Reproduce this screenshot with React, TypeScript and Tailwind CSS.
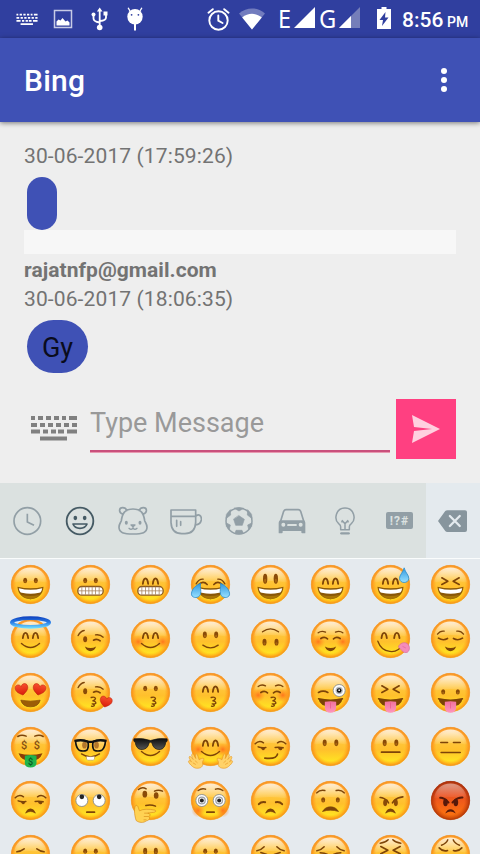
import type { ReactNode } from "react";

const INK = "#7d4408";

/* ---------- emoji parts, drawn around the centre of a face of radius 58 ---------- */

type DotsProps = { x?: number; y?: number; rx?: number; ry?: number };
const Dots = ({ x = 16, y = -12, rx = 6, ry = 8 }: DotsProps) => (
  <g fill="#8a4b08">
    <ellipse cx={-x} cy={y} rx={rx} ry={ry} />
    <ellipse cx={x} cy={y} rx={rx} ry={ry} />
    <ellipse cx={-x} cy={y + ry * 0.4} rx={rx * 0.5} ry={ry * 0.4} fill="#a9660f" />
    <ellipse cx={x} cy={y + ry * 0.4} rx={rx * 0.5} ry={ry * 0.4} fill="#a9660f" />
  </g>
);

const Line = ({ d, w = 4.5, c = INK }: { d: string; w?: number; c?: string }) => (
  <path d={d} fill="none" stroke={c} strokeWidth={w} strokeLinecap="round" strokeLinejoin="round" />
);

const Arches = ({ x = 15, y = -10 }: { x?: number; y?: number }) => (
  <g transform={`translate(0 ${y})`}>
    <g transform={`translate(${-x} 0)`}><Line d="M-8 8Q-6 -8 0 -8Q6 -8 8 8" w={5.5} /></g>
    <g transform={`translate(${x} 0)`}><Line d="M-8 8Q-6 -8 0 -8Q6 -8 8 8" w={5.5} /></g>
  </g>
);

const Grin = () => (
  <g>
    <path d="M-39 7Q0 16 39 7C38 30 21 44 0 44C-21 44 -38 30 -39 7Z" fill="#8a5808" />
    <path d="M-27 31Q0 38 27 31Q15 44 0 44Q-15 44 -27 31Z" fill="#a87406" />
    <path d="M-35 11Q0 20 35 11Q33 24 26 25Q0 31 -26 25Q-33 24 -35 11Z" fill="#fff" />
  </g>
);

const Grimace = () => (
  <g>
    <rect x="-38" y="6" width="76" height="26" rx="12" fill="#fff" stroke="#8a5a20" strokeWidth="4" />
    <path d="M-37 19H37M-26 7V31M-15 7V31M-5 7V31M5 7V31M15 7V31M26 7V31" stroke="#a88662" strokeWidth="2.4" />
  </g>
);

const Smile = () => <Line d="M-27 15Q0 39 27 15" />;
const SmallSmile = () => <path d="M-17 24Q0 33 17 24Q11 38 0 38Q-11 38 -17 24Z" fill={INK} />;
const Frown = () => <path d="M-15 38Q-10 25 0 25Q10 25 15 38Q7 33 0 33Q-7 33 -15 38Z" fill={INK} stroke={INK} strokeWidth="1.5" />;

const Blush = ({ y = 10 }: { y?: number }) => (
  <g>
    <circle cx="-37" cy={y} r="21" fill="url(#blush)" />
    <circle cx="37" cy={y} r="21" fill="url(#blush)" />
  </g>
);

const Heart = ({ x, y, s = 1, r = 0 }: { x: number; y: number; s?: number; r?: number }) => (
  <path
    transform={`translate(${x} ${y}) rotate(${r}) scale(${s})`}
    d="M0 17C-9 11 -20 4 -19 -7C-18 -18 -4 -19 0 -9C4 -19 18 -18 19 -7C20 4 9 11 0 17Z"
    fill="url(#heart)"
    stroke="#b9200c"
    strokeWidth="1.5"
  />
);

const Kiss = () => <Line d="M2 15Q13 12 15 18Q15 22 7 25Q17 27 16 32Q13 35 5 34Q13 36 11 40Q7 43 3 41" w={4} />;

const Squeeze = () => (
  <g>
    <Line d="M-26 -20L-8 -10L-26 0" w={5} />
    <Line d="M26 -20L8 -10L26 0" w={5} />
  </g>
);

const Tongue = () => (
  <g>
    <path d="M-36 19Q0 27 36 19Q33 42 0 42Q-33 42 -36 19Z" fill="#7b4306" />
    <path d="M-17 28Q0 24 17 28V45Q16 61 0 61Q-16 61 -17 45Z" fill="url(#tongue)" />
    <path d="M0 30V48" stroke="#e85586" strokeWidth="2" />
    <Line d="M-36 19Q0 27 36 19" />
  </g>
);

const Wink = () => (
  <g>
    <Line d="M-37 -9Q-30 -22 -19 -24" />
    <ellipse cx="-16" cy="2" rx="6" ry="9" fill="#8a4b08" />
    <Line d="M15 -11Q29 -13 38 -4" w={4} />
    <Line d="M9 5Q19 -1 29 7" w={5} />
  </g>
);

const SoftBrows = ({ y = -19 }: { y?: number }) => (
  <g transform={`translate(0 ${y})`}>
    <Line d="M-37 3Q-27 -5 -15 1" w={4} />
    <Line d="M37 3Q27 -5 15 1" w={4} />
  </g>
);

const ClosedUp = () => (
  <g>
    <Line d="M-29 0Q-18 -7 -9 1" w={5} />
    <Line d="M29 0Q18 -7 9 1" w={5} />
  </g>
);

const SideEyes = () => (
  <g>
    <Line d="M-46 -8Q-34 -20 -21 -11" />
    <Line d="M21 -11Q34 -20 46 -8" />
    <Line d="M-37 1Q-27 5 -14 3" />
    <Line d="M14 3Q27 1 38 4" />
    <path d="M-29 2H-15Q-17 11 -23 11Q-28 10 -29 2ZM22 3H37Q35 12 29 11Q23 10 22 3Z" fill={INK} />
  </g>
);

const RoundEye = ({ x, y, r = 18, px = 0, py = 0, p = 7 }: { x: number; y: number; r?: number; px?: number; py?: number; p?: number }) => (
  <g>
    <circle cx={x} cy={y} r={r} fill="#fff" stroke="#80858a" strokeWidth="2.5" />
    <circle cx={x + px} cy={y + py} r={p} fill="#252525" />
  </g>
);

const Dollar = ({ x, y, s = 28, c = "#855011" }: { x: number; y: number; s?: number; c?: string }) => (
  <text x={x} y={y} textAnchor="middle" fontFamily="Roboto, sans-serif" fontWeight="500" fontSize={s} fill={c}>$</text>
);

const Drop = ({ d }: { d: string }) => <path d={d} fill="url(#water)" stroke="#2f8fcc" strokeWidth="2.5" />;

const Hand = ({ flip = false }: { flip?: boolean }) => (
  <g transform={flip ? "scale(-1 1)" : undefined} stroke="#e89a24" strokeWidth="2">
    <path
      d="M-54 60C-61 54 -66 49 -66 44C-65 41 -61 42 -57 46C-62 39 -66 33 -63 30C-60 28 -56 35 -52 39C-57 30 -58 23 -54 22C-50 22 -49 30 -44 36C-46 28 -46 22 -42 22C-38 24 -37 34 -34 40C-31 37 -23 33 -20 36C-18 39 -24 42 -24 48C-22 58 -26 64 -36 65C-44 66 -49 64 -54 60Z"
      fill="#ffd268"
    />
    <path d="M-53 49L-44 54M-47 42L-39 49" fill="none" />
  </g>
);

const Face = ({ children, angry = false }: { children: ReactNode; angry?: boolean }) => (
  <svg viewBox="-91.5 -79.5 180 162" className="block h-[54px] w-[60px] overflow-visible">
    <circle r="58.5" fill={angry ? "url(#rage)" : "url(#skin)"} />
    <circle r="57.5" fill={angry ? "url(#rageRim)" : "url(#rim)"} stroke={angry ? "#a03c1c" : "#e8983c"} strokeOpacity="0.65" strokeWidth="2.5" />
    <path d="M-49 -6C-46 -34 -26 -51 0 -51C26 -51 46 -34 49 -6Q0 -15 -49 -6Z" fill="url(#gloss)" opacity={angry ? 0.6 : 1} />
    {children}
  </svg>
);

const Defs = () => (
  <svg width="0" height="0" className="absolute">
    <defs>
      <linearGradient id="skin" x1="0" y1="0" x2="0" y2="1">
        <stop offset="0" stopColor="#ffc05a" />
        <stop offset=".35" stopColor="#ffc63e" />
        <stop offset=".58" stopColor="#ffc02c" />
        <stop offset=".88" stopColor="#ffe322" />
        <stop offset="1" stopColor="#ffdc1c" />
      </linearGradient>
      <linearGradient id="rage" x1="0" y1="0" x2="0" y2="1">
        <stop offset="0" stopColor="#bd4320" />
        <stop offset=".35" stopColor="#ea5020" />
        <stop offset="1" stopColor="#ff7a0c" />
      </linearGradient>
      <radialGradient id="rim">
        <stop offset=".74" stopColor="#ff9b18" stopOpacity="0" />
        <stop offset="1" stopColor="#fa8614" stopOpacity=".9" />
      </radialGradient>
      <radialGradient id="rageRim">
        <stop offset=".72" stopColor="#c03a08" stopOpacity="0" />
        <stop offset="1" stopColor="#a82c04" stopOpacity=".85" />
      </radialGradient>
      <linearGradient id="gloss" x1="0" y1="0" x2="0" y2="1">
        <stop offset="0" stopColor="#fff" stopOpacity=".78" />
        <stop offset="1" stopColor="#fff" stopOpacity=".05" />
      </linearGradient>
      <radialGradient id="blush">
        <stop offset="0" stopColor="#ff6418" stopOpacity=".8" />
        <stop offset="1" stopColor="#ff8c1c" stopOpacity="0" />
      </radialGradient>
      <linearGradient id="heart" x1="0" y1="0" x2="0" y2="1">
        <stop offset="0" stopColor="#f8502c" />
        <stop offset="1" stopColor="#d81c0c" />
      </linearGradient>
      <linearGradient id="tongue" x1="0" y1="0" x2="0" y2="1">
        <stop offset="0" stopColor="#f0709c" />
        <stop offset="1" stopColor="#ff98bc" />
      </linearGradient>
      <linearGradient id="water" x1="0" y1="0" x2="0" y2="1">
        <stop offset="0" stopColor="#3098e0" />
        <stop offset="1" stopColor="#98e0ff" />
      </linearGradient>
      <linearGradient id="halo" gradientUnits="userSpaceOnUse" x1="0" y1="-67" x2="0" y2="-30">
        <stop offset="0" stopColor="#0c3cba" />
        <stop offset=".5" stopColor="#2a7ee8" />
        <stop offset="1" stopColor="#74e4ff" />
      </linearGradient>
      <linearGradient id="lens" x1="0" y1="0" x2="0" y2="1">
        <stop offset="0" stopColor="#0c0c0c" />
        <stop offset="1" stopColor="#555" />
      </linearGradient>
    </defs>
  </svg>
);

const emojis: ReactNode[] = [
  <><Dots /><Grin /></>,
  <><Dots /><Grimace /></>,
  <><Arches /><Grimace /></>,
  <>
    <Line d="M-43 -2Q-35 -17 -22 -16" w={4} /><Line d="M43 -2Q35 -17 22 -16" w={4} />
    <Line d="M-36 1Q-22 -13 -10 0" w={5} /><Line d="M36 1Q22 -13 10 0" w={5} />
    <Grin />
    <Drop d="M-30 -3C-46 2 -59 18 -57 31C-54 42 -34 42 -30 29C-27 19 -32 7 -30 -3Z" />
    <Drop d="M30 -3C46 2 59 18 57 31C54 42 34 42 30 29C27 19 32 7 30 -3Z" />
  </>,
  <><Dots y={-17} rx={6.5} ry={15} /><Grin /></>,
  <><Arches x={15} y={-10} /><Grin /></>,
  <><Arches x={15} y={-10} /><Grin /><Drop d="M41 -50C37 -35 27 -29 27 -18C28 -2 54 -2 55 -18C55 -29 44 -36 41 -50Z" /></>,
  <><Squeeze /><Grin /></>,

  <><Arches y={-9} /><Smile /><ellipse cy="-48" rx="56" ry="13" fill="none" stroke="url(#halo)" strokeWidth="11" /></>,
  <><Wink /><SmallSmile /></>,
  <><Blush /><Arches y={-9} /><Smile /></>,
  <><Dots x={17} y={-11} rx={6} ry={10} /><Line d="M-23 20Q0 36 23 20" w={4} /></>,
  <><Dots x={18} y={11} rx={6} ry={10} /><Line d="M-24 -20Q0 -38 24 -20" w={4} /></>,
  <><Blush /><SoftBrows y={-20} /><ClosedUp /><SmallSmile /></>,
  <><Arches x={19} y={-9} /><Line d="M-38 8C-25 45 20 50 36 18" w={4} /><path d="M24 26C25 17 36 11 45 13C59 17 60 35 51 41C38 46 34 34 24 26Z" fill="#f58cba" stroke="#d6669a" strokeWidth="2" /><Line d="M37 24L45 28" w={2} c="#df6398" /></>,
  <><Line d="M-39 -13Q-31 -24 -19 -22" w={4} /><Line d="M39 -13Q31 -24 19 -22" w={4} /><Line d="M-36 -1Q-22 8 -9 0" w={5} /><Line d="M36 -1Q22 8 9 0" w={5} /><SmallSmile /></>,

  <><Heart x={-26} y={-9} r={-12} /><Heart x={26} y={-9} r={12} /><path d="M-29 23Q0 29 29 23Q24 43 0 43Q-24 43 -29 23Z" fill="#9c5d06" stroke={INK} strokeWidth="2" /></>,
  <><g transform="translate(0 -6)"><Wink /></g><Kiss /><Heart x={46} y={28} s={0.95} r={14} /></>,
  <><Dots /><Kiss /></>,
  <><Arches /><Kiss /></>,
  <><Blush y={8} /><SoftBrows y={-21} /><ClosedUp /><Kiss /></>,
  <><Line d="M-36 0Q-22 -8 -8 0" w={5} /><RoundEye x={26} y={-6} /><circle cx="26" cy="-6" r="11" fill="#b7bcc0" /><circle cx="26" cy="-6" r="7" fill="#111" /><circle cx="26" cy="-7" r="2.5" fill="#fff" /><Tongue /></>,
  <><Squeeze /><Tongue /></>,
  <><Dots x={22} y={-2} rx={6} ry={8} /><Tongue /></>,

  <>
    <Line d="M-38 -30Q-27 -37 -13 -31" /><Line d="M38 -30Q27 -37 13 -31" />
    <Dollar x={-19} y={8} s={33} /><Dollar x={19} y={8} s={33} />
    <path d="M-36 20Q0 29 36 20Q28 43 0 43Q-28 43 -36 20Z" fill="#8b3b08" />
    <path d="M-17 28Q0 23 18 28V51Q16 63 0 63Q-16 63 -17 51Z" fill="#20b34b" />
    <Dollar x={0} y={54} s={27} c="#075a22" />
  </>,
  <>
    <path d="M-27 22Q0 40 27 22" fill="none" stroke={INK} strokeWidth="4" strokeLinecap="round" />
    <path d="M-12 29Q0 32 12 29V38Q9 43 0 41Q-9 43 -12 38Z" fill="#fff" stroke="#a9814c" strokeWidth="1.5" />
    <ellipse cx="-18" cy="-4" rx="7" ry="10" fill="#a76007" /><ellipse cx="18" cy="-4" rx="7" ry="10" fill="#a76007" />
    <path d="M-45 -17Q-25 -21 -8 -15Q-4 2 -11 11Q-22 16 -34 11Q-43 5 -45 -17ZM45 -17Q25 -21 8 -15Q4 2 11 11Q22 16 34 11Q43 5 45 -17Z" fill="#fff" fillOpacity=".15" stroke="#111" strokeWidth="5" />
    <path d="M-48 -17Q-23 -22 -7 -14H7Q23 -22 48 -17" fill="none" stroke="#111" strokeWidth="7" />
  </>,
  <>
    <Smile />
    <path d="M-50 -23Q-24 -27 0 -18Q24 -27 50 -23V-16L46 -13Q43 7 29 9Q9 11 4 -11Q0 -15 -4 -11Q-9 11 -29 9Q-43 7 -46 -13L-50 -16Z" fill="url(#lens)" stroke="#111" strokeWidth="2" />
  </>,
  <><Blush y={9} /><Arches /><Smile /><Hand /><Hand flip /></>,
  <><SideEyes /><Line d="M-17 35Q18 39 21 23" w={5} /></>,
  <><Dots x={17.5} y={-11} rx={6} ry={10} /></>,
  <><Dots x={17.5} y={-11} rx={6} ry={10} /><Line d="M-27 17H28" w={5} /></>,
  <><Line d="M-29 -12H-9M9 -12H29" w={5} /><Line d="M-28 18H29" w={5} /></>,

  <><SideEyes /><Frown /></>,
  <><RoundEye x={-26} y={0} py={-11} /><RoundEye x={26} y={0} py={-11} /><Line d="M-11 35H12" w={5} /></>,
  <>
    <Line d="M-36 -33Q-25 -42 -13 -35" /><Line d="M12 -28Q23 -34 36 -28" />
    <ellipse cx="-17" cy="-19" rx="7" ry="10" fill="#8a4b08" /><ellipse cx="17" cy="-15" rx="7" ry="10" fill="#8a4b08" />
    <Line d="M-14 15Q1 11 15 17" />
    <path d="M-43 60C-49 42 -50 20 -44 15C-37 12 -36 26 -33 31C-23 25 -5 25 14 29C18 32 15 36 4 36L-8 38C2 40 0 47 -6 48C1 53 -5 60 -12 61C-21 68 -35 67 -43 60Z" fill="#ffd253" stroke="#d98c1b" strokeWidth="2" />
    <path d="M-19 38H-6M-20 48H-7M-21 58H-12" stroke="#d98c1b" strokeWidth="2" />
  </>,
  <><Blush y={30} /><Line d="M-37 -30Q-26 -38 -15 -34" /><Line d="M37 -30Q26 -38 15 -34" /><RoundEye x={-26} y={0} p={6} /><RoundEye x={26} y={0} p={6} /><circle cx="-26" r="10" fill="none" stroke="#9da2a6" strokeWidth="4" /><circle cx="26" r="10" fill="none" stroke="#9da2a6" strokeWidth="4" /><Line d="M-11 35H11" w={5} /></>,
  <><Line d="M-35 11Q-28 3 -16 5" w={6} /><Line d="M35 11Q28 3 16 5" w={6} /><Frown /></>,
  <><Line d="M-41 -23Q-32 -33 -17 -30" /><Line d="M41 -23Q32 -33 17 -30" /><Dots x={22} y={-2} rx={6} ry={8} /><path d="M-24 33Q-16 19 0 19Q16 19 24 33Q12 29 0 29Q-12 29 -24 33Z" fill={INK} stroke={INK} strokeWidth="2" strokeLinejoin="round" /></>,
  <><Line d="M-31 -9Q-22 -10 -10 1M-11 -1L-6 7" w={5} /><Line d="M37 -11Q22 -10 10 1M12 -1L6 7" w={5} /><ellipse cx="-16" cy="7" rx="6" ry="10" fill="#8a4b08" /><ellipse cx="16" cy="7" rx="6" ry="10" fill="#8a4b08" /><Frown /></>,
  <><Line d="M-31 -8Q-22 -10 -10 2L-6 6M36 -9Q22 -10 10 2L6 6" w={6} c="#57190a" /><ellipse cx="-15" cy="6" rx="7" ry="11" fill="#57190a" /><ellipse cx="16" cy="6" rx="7" ry="11" fill="#57190a" /><path d="M-16 39Q-10 26 0 26Q10 26 16 39Q7 33 0 33Q-7 33 -16 39Z" fill="#57190a" /></>,

  <><Line d="M-41 -8Q-28 -10 -19 -17M41 -8Q28 -10 19 -17" /><Line d="M-36 5Q-22 12 -10 5M36 5Q22 12 10 5" /></>,
  <><Dots y={-10} /></>,
  <><Dots y={-10} rx={6} ry={10} /></>,
  <><Dots y={-10} rx={6} ry={8} /></>,
  <><Line d="M-41 -11Q-28 -13 -19 -23M41 -11Q28 -13 19 -23" /><Line d="M-29 -6L-11 0L-29 6M29 -6L11 0L29 6" /></>,
  <><Line d="M-41 -11Q-28 -13 -19 -23M41 -11Q28 -13 19 -23" /><Line d="M-31 -5Q-18 -5 -9 0M31 -5Q18 -5 9 0" /></>,
  <><Line d="M-31 -34Q-16 -35 -7 -44M31 -34Q16 -35 7 -44" /><Line d="M-29 -24L-8 -13L-29 -2M29 -24L8 -13L29 -2" w={5} /></>,
  <><Line d="M-27 -28Q-13 -32 -8 -44M27 -28Q13 -32 8 -44" /><Line d="M-34 -20Q-22 -7 -9 -12M34 -20Q22 -7 9 -12" w={5} /></>,
];

/* ---------- status bar ---------- */

const KeyboardRows = ({ className }: { className: string }) => (
  <svg viewBox="0 0 48 27" className={className} fill="currentColor">
    <path d="M1 1h4v4h-4zM8 1h5v4h-5zM16 1h5v4h-5zM24 1h5v4h-5zM32 1h4v4h-4zM39 1h8v4h-8zM1 8h6v4h-6zM10 8h5v4h-5zM18 8h5v4h-5zM26 8h5v4h-5zM34 8h5v4h-5zM42 8h5v4h-5zM1 14.500h9v4h-9zM13 14.500h5v4h-5zM21 14.500h5v4h-5zM28 14.500h6v4h-6zM37 14.500h10v4h-10zM10 21.500h27v4h-27z" />
  </svg>
);

const StatusBar = () => (
  <div className="flex h-[38px] shrink-0 items-center bg-[#303f9f] text-white">
    <KeyboardRows className="mt-px ml-4 h-[13px] w-[22px]" />
    <svg viewBox="0 0 20 20" className="ml-[15px] h-5 w-5">
      <rect x="1.500" y="1.500" width="17" height="17" fill="none" stroke="#c7cbe6" strokeWidth="1.500" />
      <path d="M3.500 16.500v-4l2-2 2 1 2-2.500 3 3.500 2-1 2 2v3z" fill="#fff" />
    </svg>
    <svg viewBox="0 0 18 24" className="ml-[18px] h-6 w-[18px]" fill="none" stroke="#fff" strokeWidth="1.800">
      <path d="M8.700 4v15M2.500 8v3.500q0 3 6 4M15 7v3.500q0 3-6 3.500" />
      <path d="M8.700 0.500l2.800 4h-5.600zM12.500 4.500h4v4h-4z" fill="#fff" stroke="none" />
      <circle cx="2.500" cy="7.500" r="2" fill="#fff" stroke="none" />
      <circle cx="8.700" cy="20.500" r="2.800" fill="#fff" stroke="none" />
    </svg>
    <svg viewBox="0 0 18 24" className="ml-[17px] h-6 w-[18px]">
      <circle cx="9" cy="9.800" r="7.700" fill="#fff" />
      <path d="M4 4L2.300 1.200M14 4L15.700 1.200" stroke="#fff" strokeWidth="1.300" strokeLinecap="round" />
      <path d="M9 16v7.500" stroke="#fff" strokeWidth="2" />
      <circle cx="5.600" cy="7.800" r="0.900" fill="#303f9f" /><circle cx="12.400" cy="7.800" r="0.900" fill="#303f9f" />
    </svg>
    <svg viewBox="0 0 24 24" className="mt-px ml-[63px] h-6 w-6" fill="none" stroke="#fff" strokeWidth="1.900" strokeLinecap="round">
      <circle cx="11.500" cy="12.500" r="9.200" />
      <path d="M11.300 7.500v5.200l4.200 2.300M1.500 4.700L5.800 1.200M21.500 4.700L17.200 1.200" />
    </svg>
    <svg viewBox="0 0 26 22" className="-mt-px ml-[8px] h-[22px] w-[26px]" fill="#fff">
      <path d="M0 5.500C8 -1.300 18 -1.300 26 5.500L13 21.500z" opacity=".32" />
      <path d="M3.200 9.500C9 4.600 17 4.600 22.800 9.500L13 21.500z" />
    </svg>
    <span className="-mt-[2px] ml-[13px] w-[16px] origin-left scale-x-90 font-['Noto_Sans'] text-[26px] leading-[38px]">E</span>
    <svg viewBox="0 0 21 21" className="-mt-[3px] h-[21px] w-[21px]"><path d="M21 0v21H0z" fill="#fff" /></svg>
    <span className="-mt-[2px] ml-[4px] w-[20px] origin-left scale-x-95 font-['Noto_Sans'] text-[25px] leading-[38px]">G</span>
    <svg viewBox="0 0 21 21" className="-mt-[3px] h-[21px] w-[21px]"><path d="M21 0v21H0z" fill="#757eb9" /><path d="M12 9v12H0z" fill="#fff" /></svg>
    <svg viewBox="0 0 14 22" className="-mt-[2px] ml-[17px] h-[22px] w-[14px]">
      <path d="M4.500 0h5v2H14v20H0V2h4.500z" fill="#fff" />
      <path d="M8.500 5L2.500 13h3.500l-1 6 6.500-8.500H8z" fill="#303f9f" />
    </svg>
    <span className="mt-[2px] ml-[11px] w-[41px] font-[Roboto] text-[21px] leading-6 font-medium">8:56</span>
    <span className="mt-[6px] ml-[4px] font-[Roboto] text-[14px] leading-4 font-medium">PM</span>
  </div>
);

/* ---------- keyboard tabs ---------- */

const Tab = ({ children, active = false }: { children: ReactNode; active?: boolean }) => (
  <div className={active ? "flex w-[53px] items-center justify-center text-[#455a64]" : "flex w-[53px] items-center justify-center text-[#929fa6]"}>
    <svg viewBox="0 0 96 90" className="h-[30px] w-[32px] shrink-0" fill="none" stroke="currentColor" strokeWidth="5" strokeLinecap="round" strokeLinejoin="round">
      {children}
    </svg>
  </div>
);

const Tabs = () => (
  <div className="flex h-[75px] shrink-0 bg-[#dbe1e0]">
    <div className="flex w-[426px]">
      <Tab><circle cx="49" cy="45" r="40" /><path d="M49 23V48L69 58" strokeWidth="5" strokeLinecap="butt" /></Tab>
      <Tab active>
        <circle cx="48" cy="45" r="40" strokeWidth="5.500" />
        <ellipse cx="34" cy="36" rx="5.500" ry="6.500" fill="currentColor" stroke="none" /><ellipse cx="62" cy="36" rx="5.500" ry="6.500" fill="currentColor" stroke="none" />
        <path d="M27 54H69Q64 67 48 67Q32 67 27 54Z" />
      </Tab>
      <Tab>
        <path d="M18 25C3 19 6 5 17 5C25 5 28 10 29 14M78 25C93 19 90 5 79 5C71 5 68 10 67 14M48 9C23 9 16 22 13 44C11 50 6 54 6 64C6 80 20 84 48 84C76 84 90 80 90 64C90 54 85 50 83 44C80 22 73 9 48 9Z" />
        <ellipse cx="28" cy="50" rx="4.500" ry="6" fill="currentColor" stroke="none" /><ellipse cx="69" cy="50" rx="4.500" ry="6" fill="currentColor" stroke="none" />
        <path d="M42 57H54L48 62ZM48 62V67M36 67Q42 73 48 67Q54 73 60 67" strokeWidth="4" />
      </Tab>
      <Tab>
        <path d="M3 12H77V50Q75 83 45 83H35Q5 83 3 50ZM3 31H77M78 30C87 23 95 29 94 41Q92 55 77 57" />
        <path d="M20 43V61M32 47V58" />
      </Tab>
      <Tab>
        <circle cx="48" cy="45" r="39" strokeWidth="4.500" />
        <path d="M48 29L64 40L58 58H38L32 40ZM34 7L48 15L62 7L48 5ZM10 37L23 27L22 11L11 24ZM86 37L73 27L74 11L85 24ZM19 70L22 57L10 51L10 60ZM77 70L74 57L86 51L86 60ZM36 82L39 73H57L61 82L48 84Z" fill="currentColor" strokeWidth="2" />
      </Tab>
      <Tab>
        <path d="M14 45L23 16Q25 11 31 11H66Q72 11 74 16L83 45" />
        <path fillRule="evenodd" stroke="none" fill="currentColor" d="M8 50Q8 43 15 43H81Q88 43 88 50V80Q88 82 86 82H79Q76 82 76 79V75H20V79Q20 82 17 82H10Q8 82 8 80ZM16 56A6 6 0 1 0 28 56A6 6 0 1 0 16 56ZM68 56A6 6 0 1 0 80 56A6 6 0 1 0 68 56ZM35 54Q31 58 35 60H61Q65 57 61 54Z" />
      </Tab>
      <Tab>
        <path d="M35 71V62Q35 57 29 53C14 40 20 6 48 6C76 6 82 40 67 53Q61 57 61 62V71ZM48 71V52M40 44L48 53L56 44M38 47H42M54 47H58" strokeWidth="4.500" />
        <path d="M37 82H59" strokeWidth="7" />
      </Tab>
      <div className="flex flex-1 items-center justify-center pl-px">
        <span className="flex h-[17px] w-[27px] items-center justify-center rounded-[2px] bg-[#929fa6] pl-px font-[Roboto] text-[12px] leading-none font-bold tracking-[1px] text-[#dbe1e0]">!?#</span>
      </div>
    </div>
    <div className="flex flex-1 items-center justify-center bg-[#e4eaee] pr-[2px]">
      <svg viewBox="0 0 88 66" className="h-[22px] w-[29px]">
        <path d="M22 3Q24 0 29 0H82Q88 0 88 6V60Q88 66 82 66H29Q24 66 22 63L0 33Z" fill="#87959d" />
        <path d="M36 18L66 48M66 18L36 48" stroke="#e4eaee" strokeWidth="7" strokeLinecap="round" />
      </svg>
    </div>
  </div>
);

export default function App() {
  return (
    <div className="flex h-[854px] w-[480px] flex-col overflow-hidden bg-[#eeeeee] font-[Roboto,sans-serif]">
      <Defs />
      <StatusBar />
      <header className="z-10 flex h-[84px] shrink-0 items-center justify-between bg-[#3f51b5] pr-[33px] pl-6 text-white shadow-[0_1px_5px_rgba(0,0,0,0.5)]">
        <h1 className="pt-[2px] text-[30px] leading-9 font-medium tracking-[0.2px]">Bing</h1>
        <div className="flex flex-col gap-[3px]">
          <i className="h-1.5 w-1.5 rounded-full bg-white" />
          <i className="h-1.5 w-1.5 rounded-full bg-white" />
          <i className="h-1.5 w-1.5 rounded-full bg-white" />
        </div>
      </header>

      <main className="flex h-[361px] shrink-0 flex-col px-6 pt-5 text-[21px] leading-[28px] text-[#737373]">
        <p className="tracking-[0.12px]">30-06-2017 (17:59:26)</p>
        <div className="mt-[7px] ml-[3px] h-[53px] w-[30px] rounded-[15px] bg-[#3f51b5]" />
        <div className="h-6 bg-[#f7f7f7]" />
        <p className="mt-[2px] font-bold tracking-[0.05px]">rajatnfp@gmail.com</p>
        <p className="mt-px tracking-[0.12px]">30-06-2017 (18:06:35)</p>
        <div className="mt-[7px] ml-[3px] flex h-[53px] w-[61px] items-center justify-center rounded-[27px] bg-[#3f51b5] pt-[2px] text-[27px] text-[#0a0c1c]">Gy</div>

        <div className="mt-[26px] flex h-[60px]">
          <KeyboardRows className="mt-4 ml-[6px] h-[27px] w-[48px] text-[#808080]" />
          <div className="ml-3 flex h-[54px] w-[300px] flex-col justify-between border-b border-[#e899b0]">
            <span className="pt-[8px] text-[27px] leading-8 text-[#999999]">Type Message</span>
            <div className="h-[2px] bg-[#c9507c]" />
          </div>
          <div className="ml-[6px] flex h-[60px] w-[60px] items-center justify-center bg-[#ff4081]">
            <svg viewBox="0 0 28 28" className="h-7 w-7"><path d="M0 0L28 14L0 28L2 16L20 14L2 12Z" fill="#ffd0df" /></svg>
          </div>
        </div>
      </main>

      <section className="flex min-h-0 flex-1 flex-col bg-[#e5eaee]">
        <Tabs />
        <div className="h-[296px] overflow-hidden shadow-[inset_0_1px_0_#fafcfc]">
          <div className="grid grid-cols-8">
            {emojis.map((features, i) => (
              <Face key={i} angry={i === 39}>{features}</Face>
            ))}
          </div>
        </div>
      </section>
    </div>
  );
}
